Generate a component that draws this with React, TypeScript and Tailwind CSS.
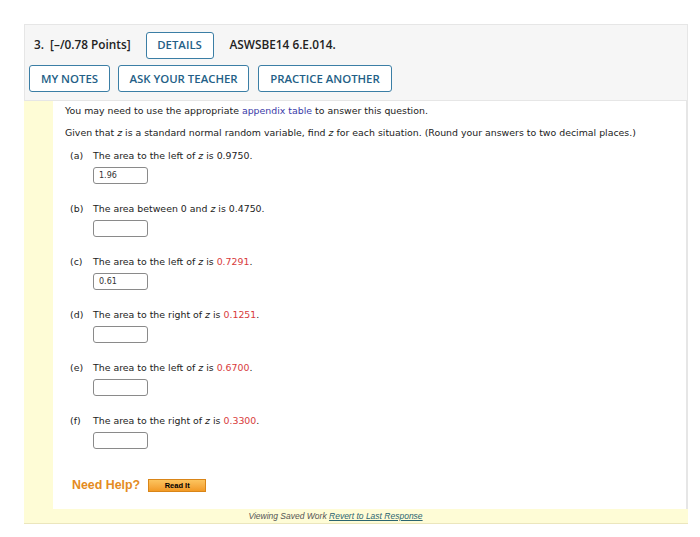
const items = [
  { id: 'a', text: 'The area to the left of', value: '0.9750', red: false, answer: '1.96' },
  { id: 'b', text: 'The area between 0 and', value: '0.4750', red: false, answer: '' },
  { id: 'c', text: 'The area to the left of', value: '0.7291', red: true, answer: '0.61' },
  { id: 'd', text: 'The area to the right of', value: '0.1251', red: true, answer: '' },
  { id: 'e', text: 'The area to the left of', value: '0.6700', red: true, answer: '' },
  { id: 'f', text: 'The area to the right of', value: '0.3300', red: true, answer: '' },
]

function HeaderButton({ label, className = '' }: { label: string; className?: string }) {
  return (
    <button
      className={`h-[27px] rounded-[3px] border-[1.5px] border-[#3b7ea5] bg-white text-[11.4px] font-semibold text-[#245f87] ${className}`}
    >
      {label}
    </button>
  )
}

function Question({ item }: { item: (typeof items)[number] }) {
  return (
    <div className="mb-[19px] ml-[5px]">
      <div className="flex h-[12px] items-center">
        <span className="w-[23px]">({item.id})</span>
        <span>
          {item.text} <i>z</i> is{' '}
          <span className={item.red ? 'text-[#d83a3a]' : ''}>{item.value}</span>.
        </span>
      </div>
      <div className="ml-[23px] mt-[5px] flex h-[17px] w-[55px] items-center rounded-[3px] border border-[#8a8a8a] bg-white pl-[5px] text-[8px] text-[#333]">
        {item.answer}
      </div>
    </div>
  )
}

export default function App() {
  return (
    <div className="min-h-[537px] bg-white pl-[24px] pt-[24px]">
      <div className="w-[664px]">
        <div className="h-[77px] border border-[#e6e6e6] bg-[#f6f6f6] px-[4px] pt-[7px] font-['Open_Sans',sans-serif]">
          <div className="flex h-[26px] items-center">
            <span className="ml-[5px] text-[11.8px] font-semibold text-[#222]">3.&nbsp; [–/0.78 Points]</span>
            <HeaderButton label="DETAILS" className="ml-[15px] h-[26px] w-[68px]" />
            <span className="ml-[16px] text-[11.8px] font-semibold text-[#222]">ASWSBE14 6.E.014.</span>
          </div>
          <div className="mt-[7px] flex items-center">
            <HeaderButton label="MY NOTES" className="w-[81px]" />
            <HeaderButton label="ASK YOUR TEACHER" className="ml-[8px] w-[131px]" />
            <HeaderButton label="PRACTICE ANOTHER" className="ml-[9px] w-[134px]" />
          </div>
        </div>
        <div className="bg-[#fefcd6]">
          <div className="ml-[29px] h-[408px] border-r-2 border-[#e6e6e6] bg-white pl-[12px] pt-[4px] font-['DejaVu_Sans',sans-serif] text-[9.4px] text-[#222]">
            <p className="flex h-[12px] items-center">
              You may need to use the appropriate&nbsp;<span className="text-[#3a3aa8]">appendix table</span>&nbsp;to answer this question.
            </p>
            <p className="mt-[10px] flex h-[12px] items-center">
              Given that&nbsp;<i>z</i>&nbsp;is a standard normal random variable, find&nbsp;<i>z</i>&nbsp;for each situation. (Round your answers to two decimal places.)
            </p>
            <div className="mt-[11px]">
              {items.map((item) => (
                <Question key={item.id} item={item} />
              ))}
            </div>
            <div className="mt-[27px] flex items-center pl-[7px] font-['Liberation_Sans',sans-serif]">
              <span className="text-[12.4px] font-bold text-[#e48b22]">Need Help?</span>
              <span className="ml-[8px] flex h-[13px] w-[58px] items-center justify-center border border-[#d98518] bg-gradient-to-b from-[#fcc45e] to-[#f29a24] text-[7.5px] font-bold text-black">
                Read It
              </span>
            </div>
          </div>
          <div className="flex h-[15px] items-center justify-center border-b border-[#ebe6bd] pr-[41px] font-['Liberation_Sans',sans-serif] text-[8.5px] italic text-[#555]">
            Viewing Saved Work&nbsp;<span className="text-[#2b6570] underline">Revert to Last Response</span>
          </div>
        </div>
      </div>
    </div>
  )
}
